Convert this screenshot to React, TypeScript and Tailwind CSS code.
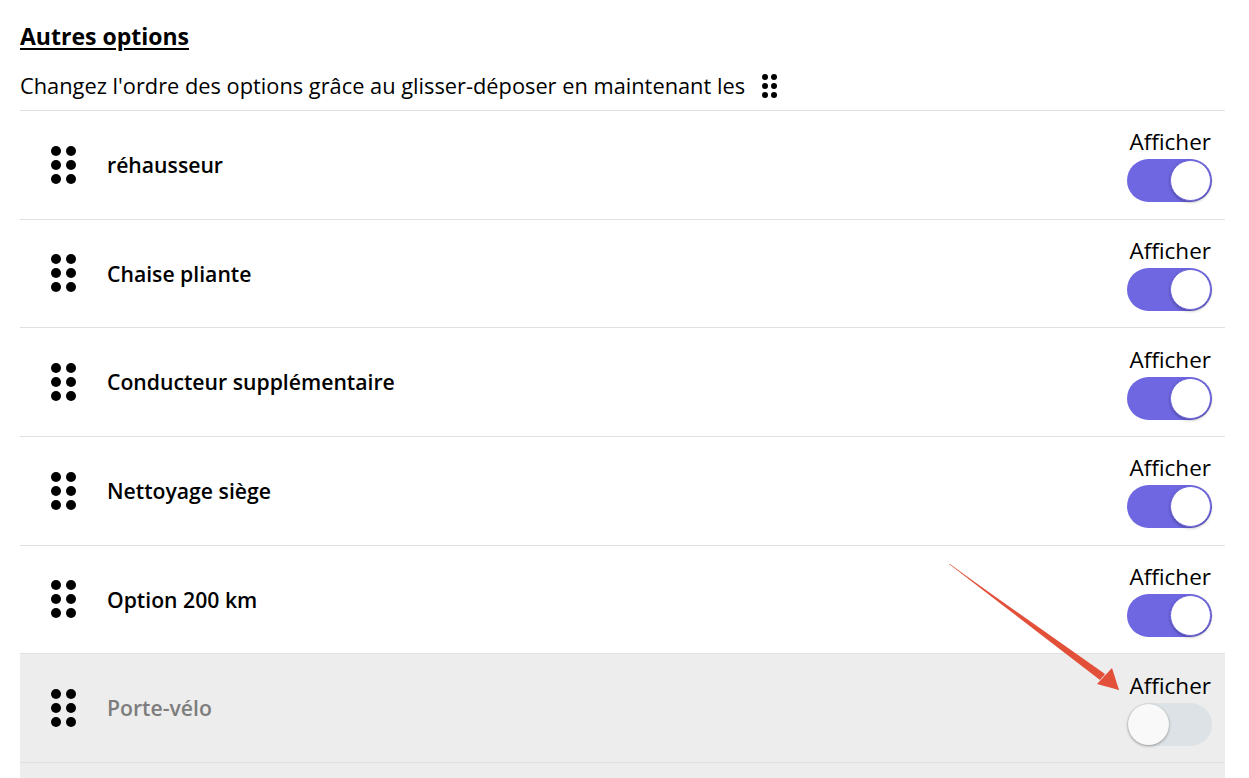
import { useState } from 'react';

type Option = { id: string; label: string; visible: boolean };

const initialOptions: Option[] = [
  { id: 'rehausseur', label: 'réhausseur', visible: true },
  { id: 'chaise', label: 'Chaise pliante', visible: true },
  { id: 'conducteur', label: 'Conducteur supplémentaire', visible: true },
  { id: 'nettoyage', label: 'Nettoyage siège', visible: true },
  { id: 'km', label: 'Option 200 km', visible: true },
  { id: 'velo', label: 'Porte-vélo', visible: false },
];

function DragDots({ small }: { small?: boolean }) {
  const dot = small ? 'w-[6px] h-[6px]' : 'w-[10px] h-[10px]';
  return (
    <div className={small ? 'grid grid-cols-2 gap-x-[3px] gap-y-[3px]' : 'grid grid-cols-2 gap-x-[5px] gap-y-[4px]'}>
      {Array.from({ length: 6 }).map((_, i) => (
        <span key={i} className={`${dot} rounded-full bg-black`} />
      ))}
    </div>
  );
}

function Toggle({ on, onClick }: { on: boolean; onClick: () => void }) {
  return (
    <button
      type="button"
      onClick={onClick}
      className={`relative w-[85px] h-[43px] rounded-full flex items-center px-[1px] ${on ? 'bg-[#6f67e1] justify-end' : 'bg-[#dce2e5] justify-start'}`}
    >
      <span
        className={`w-[41px] h-[41px] rounded-full shadow-[0_1px_3px_rgba(0,0,0,0.35)] ${on ? 'bg-white border border-[#6f67e1]' : 'bg-[#f9f9f9]'}`}
      />
    </button>
  );
}

export default function App() {
  const [options, setOptions] = useState(initialOptions);
  const toggle = (id: string) =>
    setOptions((prev) => prev.map((o) => (o.id === id ? { ...o, visible: !o.visible } : o)));

  return (
    <div className="relative h-[778px] overflow-hidden bg-white text-black" style={{ fontFamily: '"Open Sans", Lato, sans-serif' }}>
      <div className="pl-5 pr-6">
        <h2 className="pt-[20px] text-[23px] font-bold underline underline-offset-[3px] decoration-[2px] leading-[32px]">Autres options</h2>
        <div className="flex items-center gap-[17px] pt-[20px] pb-[10px] text-[21.8px] leading-[28px]">
          <span>Changez l'ordre des options grâce au glisser-déposer en maintenant les</span>
          <DragDots small />
        </div>

        {/* Liste des options */}
        <div className="border-t border-[#e0e0e0]">
          {options.map((o) => (
            <div
              key={o.id}
              className={`h-[108.67px] flex items-center border-b border-[#e0e0e0] pl-[31px] pr-[15px] ${o.visible ? 'bg-white' : 'bg-[#ededed]'}`}
            >
              <DragDots />
              <span className={`ml-[31px] flex-1 text-[21.2px] font-semibold ${o.visible ? 'text-black' : 'text-[#7d7d7d]'}`}>{o.label}</span>
              <div className="flex flex-col items-end gap-[3px] mt-[1px]">
                <span className="text-[22.5px] leading-[28px] -mr-[1px]">Afficher</span>
                <div className="-mr-[2px]">
                  <Toggle on={o.visible} onClick={() => toggle(o.id)} />
                </div>
              </div>
            </div>
          ))}
          <div className="h-[40px] bg-[#ededed]" />
        </div>
      </div>

      {/* Flèche d'annotation */}
      <svg className="absolute left-0 top-0 pointer-events-none" width="1249" height="778">
        <polygon points="949,564 1106,677 1102,683 1119,690 1110,673 1106,678 950,564" fill="#e2503a" />
        <polygon points="949,564 1105,674 1100,680" fill="#e2503a" />
        <polygon points="1119,690 1097,684 1112,668" fill="#e2503a" />
      </svg>
    </div>
  );
}
